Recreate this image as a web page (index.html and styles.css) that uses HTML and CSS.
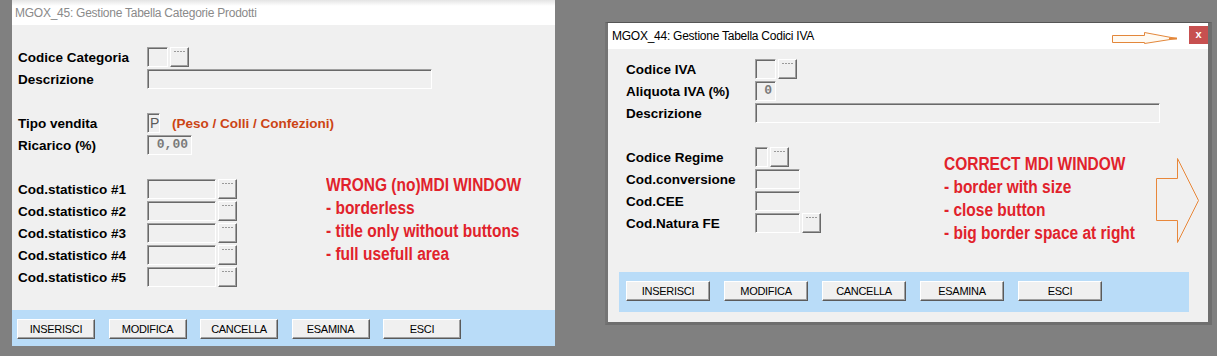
FILE: index.html
```html
<!DOCTYPE html>
<html lang="it">
<head>
    <meta charset="UTF-8"/>
    <title>MDI windows</title>
    <link rel="stylesheet" href="styles.css">
</head>
<body>
    <div class="desk">
        <div class="win win-flat">
            <div class="title title-off">MGOX_45: Gestione Tabella Categorie Prodotti</div>
            <div class="client">
                <div class="form form-45">
                    <div class="row"><span class="lbl">Codice Categoria</span><span class="fld w21"></span><span class="pick"></span></div>
                    <div class="row"><span class="lbl">Descrizione</span><span class="fld w285"></span></div>
                    <div class="row"></div>
                    <div class="row"><span class="lbl">Tipo vendita</span><span class="fld w13 txt">P</span><span class="hint">(Peso / Colli / Confezioni)</span></div>
                    <div class="row"><span class="lbl">Ricarico (%)</span><span class="fld w45 num">0,00</span></div>
                    <div class="row"></div>
                    <div class="group">
                        <div class="rows rows-45">
                            <div class="row"><span class="lbl">Cod.statistico #1</span><span class="fld w69"></span><span class="pick"></span></div>
                            <div class="row"><span class="lbl">Cod.statistico #2</span><span class="fld w69"></span><span class="pick"></span></div>
                            <div class="row"><span class="lbl">Cod.statistico #3</span><span class="fld w69"></span><span class="pick"></span></div>
                            <div class="row"><span class="lbl">Cod.statistico #4</span><span class="fld w69"></span><span class="pick"></span></div>
                            <div class="row"><span class="lbl">Cod.statistico #5</span><span class="fld w69"></span><span class="pick"></span></div>
                        </div>
                        <div class="note note-45">
                            WRONG (no)MDI WINDOW<br>
                            - borderless<br>
                            - title only without buttons<br>
                            - full usefull area
                        </div>
                    </div>
                </div>
                <div class="toolbar tb-45">
                    <button class="btn b78">INSERISCI</button>
                    <button class="btn b78">MODIFICA</button>
                    <button class="btn b78">CANCELLA</button>
                    <button class="btn b78">ESAMINA</button>
                    <button class="btn b78">ESCI</button>
                </div>
            </div>
        </div>

        <div class="win win-mdi">
            <div class="title title-on">
                <span>MGOX_44: Gestione Tabella Codici IVA</span>
                <svg class="arrow-small" width="66" height="13" viewBox="0 0 66 13">
                    <polygon points="0.5,3.5 32.5,3.5 32.5,0.5 64.5,6.5 32.5,11.5 32.5,10.5 0.5,10.5" fill="#fffaf2" stroke="#e3873a" stroke-width="1"/>
                    <line x1="57" y1="6.5" x2="65" y2="6.5" stroke="#e3873a" stroke-width="2"/>
                </svg>
                <span class="close">x</span>
            </div>
            <div class="client">
                <div class="form form-44">
                    <div class="row"><span class="lbl">Codice IVA</span><span class="fld w21"></span><span class="pick"></span></div>
                    <div class="row"><span class="lbl">Aliquota IVA (%)</span><span class="fld w21 num">0</span></div>
                    <div class="row"><span class="lbl">Descrizione</span><span class="fld w405"></span></div>
                    <div class="row"></div>
                    <div class="group">
                        <div class="rows rows-44">
                            <div class="row"><span class="lbl">Codice Regime</span><span class="fld w13"></span><span class="pick"></span></div>
                            <div class="row"><span class="lbl">Cod.conversione</span><span class="fld w45"></span></div>
                            <div class="row"><span class="lbl">Cod.CEE</span><span class="fld w45"></span></div>
                            <div class="row"><span class="lbl">Cod.Natura FE</span><span class="fld w45"></span><span class="pick"></span></div>
                        </div>
                        <div class="note note-44">
                            CORRECT MDI WINDOW<br>
                            - border with size<br>
                            - close button<br>
                            - big border space at right
                        </div>
                        <svg class="arrow-big" width="44" height="86" viewBox="0 0 44 86">
                            <polygon points="0.5,20.5 21.5,20.5 21.5,0.5 42.5,42.5 21.5,84.5 21.5,62.5 0.5,62.5" fill="none" stroke="#e8873a" stroke-width="1"/>
                        </svg>
                    </div>
                </div>
                <div class="toolbar tb-44">
                    <button class="btn b84">INSERISCI</button>
                    <button class="btn b84">MODIFICA</button>
                    <button class="btn b84">CANCELLA</button>
                    <button class="btn b84">ESAMINA</button>
                    <button class="btn b84">ESCI</button>
                </div>
            </div>
        </div>
    </div>
</body>
</html>
```

FILE: styles.css
```css
* {
    margin: 0;
    padding: 0;
    box-sizing: border-box;
}
html, body {
    width: 100%;
    height: 100%;
    background-color: #808080;
    font-family: "Liberation Sans", Arial, sans-serif;
    overflow: hidden;
}
.desk {
    display: flex;
    align-items: flex-start;
}
.win {
    display: flex;
    flex-direction: column;
    flex: none;
}
.win-flat {
    margin-left: 12px;
    width: 543px;
}
.win-mdi {
    margin-left: 50px;
    margin-top: 22px;
    width: 607px;
    border-top: 1px solid #555555;
    border-left: 3px solid #747474;
    border-right: 4px solid #6e6e6e;
    border-bottom: 3px solid #6e6e6e;
}
.title {
    display: flex;
    align-items: center;
    background-color: #ffffff;
    font-size: 12px;
    letter-spacing: -0.25px;
    white-space: nowrap;
}
.title-off {
    height: 25px;
    padding-left: 3px;
    color: #8a8a8a;
    background: linear-gradient(#e4e4e4, #ffffff 6px);
}
.title-on {
    height: 26px;
    padding-left: 4px;
    color: #000000;
}
.arrow-small {
    margin-left: auto;
    margin-right: 11px;
    margin-top: 5px;
}
.close {
    align-self: flex-start;
    margin-top: 3px;
    width: 19px;
    height: 18px;
    background-color: #c75050;
    color: #ffffff;
    font-weight: bold;
    font-size: 11px;
    letter-spacing: 0;
    line-height: 16px;
    text-align: center;
}
.client {
    background-color: #f0f0f0;
    display: flex;
    flex-direction: column;
}
.form {
    font-size: 13.5px;
}
.form-45 {
    height: 285px;
    padding: 21px 0 0 6px;
}
.form-44 {
    height: 223px;
    padding: 9px 0 0 18px;
}
.row {
    display: flex;
    align-items: center;
    height: 22px;
}
.lbl {
    width: 129px;
    flex: none;
    font-weight: bold;
    color: #000000;
}
.fld {
    height: 20px;
    flex: none;
    border: 1px solid;
    border-color: #a0a0a0 #ffffff #ffffff #a0a0a0;
    box-shadow: inset 1px 1px 0 #696969;
    background-color: #f0f0f0;
    color: #707070;
    line-height: 18px;
}
.w13 { width: 13px; }
.w21 { width: 21px; }
.w45 { width: 45px; }
.w69 { width: 69px; }
.w285 { width: 285px; }
.w405 { width: 405px; }
.txt {
    padding-left: 2px;
    font-size: 14px;
    color: #5a5a5a;
}
.num {
    font-family: "Liberation Mono", "Courier New", monospace;
    font-weight: bold;
    font-size: 13px;
    text-align: right;
    padding-right: 3px;
    color: #7a7a7a;
}
.pick {
    width: 19px;
    height: 20px;
    flex: none;
    margin-left: 2px;
    border: 1px solid;
    border-color: #ffffff #696969 #696969 #ffffff;
    box-shadow: inset -1px -1px 0 #a0a0a0;
    background-color: #f0f0f0;
    padding: 3px 3px 0 3px;
}
.pick::before {
    content: "";
    display: block;
    height: 1px;
    background: repeating-linear-gradient(90deg, #9a9a9a 0 2px, transparent 2px 3px);
}
.hint {
    margin-left: 12px;
    font-weight: bold;
    color: #cc4414;
}
.group {
    display: flex;
    align-items: flex-start;
}
.rows {
    flex: none;
}
.rows-45 { width: 219px; }
.rows-44 { width: 195px; }
.note {
    flex: none;
    width: 180px;
    font-weight: bold;
    font-size: 18px;
    line-height: 23px;
    color: #e1222b;
    white-space: nowrap;
    transform: scaleX(0.86);
    transform-origin: left top;
}
.note-45 {
    margin-left: 89px;
    margin-top: -4.5px;
}
.note-44 {
    margin-left: 123px;
    margin-top: 6.5px;
}
.arrow-big {
    flex: none;
    margin-left: auto;
    margin-right: 8px;
    margin-top: 12px;
}
.toolbar {
    display: flex;
    background-color: #b9dcf8;
}
.tb-45 {
    height: 36px;
    padding: 9px 0 0 5px;
    gap: 13.5px;
}
.tb-44 {
    height: 40px;
    margin: 0 19px 10px 11px;
    padding: 9px 0 0 7px;
    gap: 14px;
}
.btn {
    height: 20px;
    flex: none;
    border: 1px solid;
    border-color: #ffffff #5a5a5a #5a5a5a #ffffff;
    box-shadow: inset -1px -1px 0 #a0a0a0;
    background-color: #f0f0f0;
    font-family: "Liberation Sans", Arial, sans-serif;
    font-size: 11px;
    letter-spacing: -0.3px;
    color: #000000;
}
.b78 { width: 78px; }
.b84 { width: 84px; }
```
